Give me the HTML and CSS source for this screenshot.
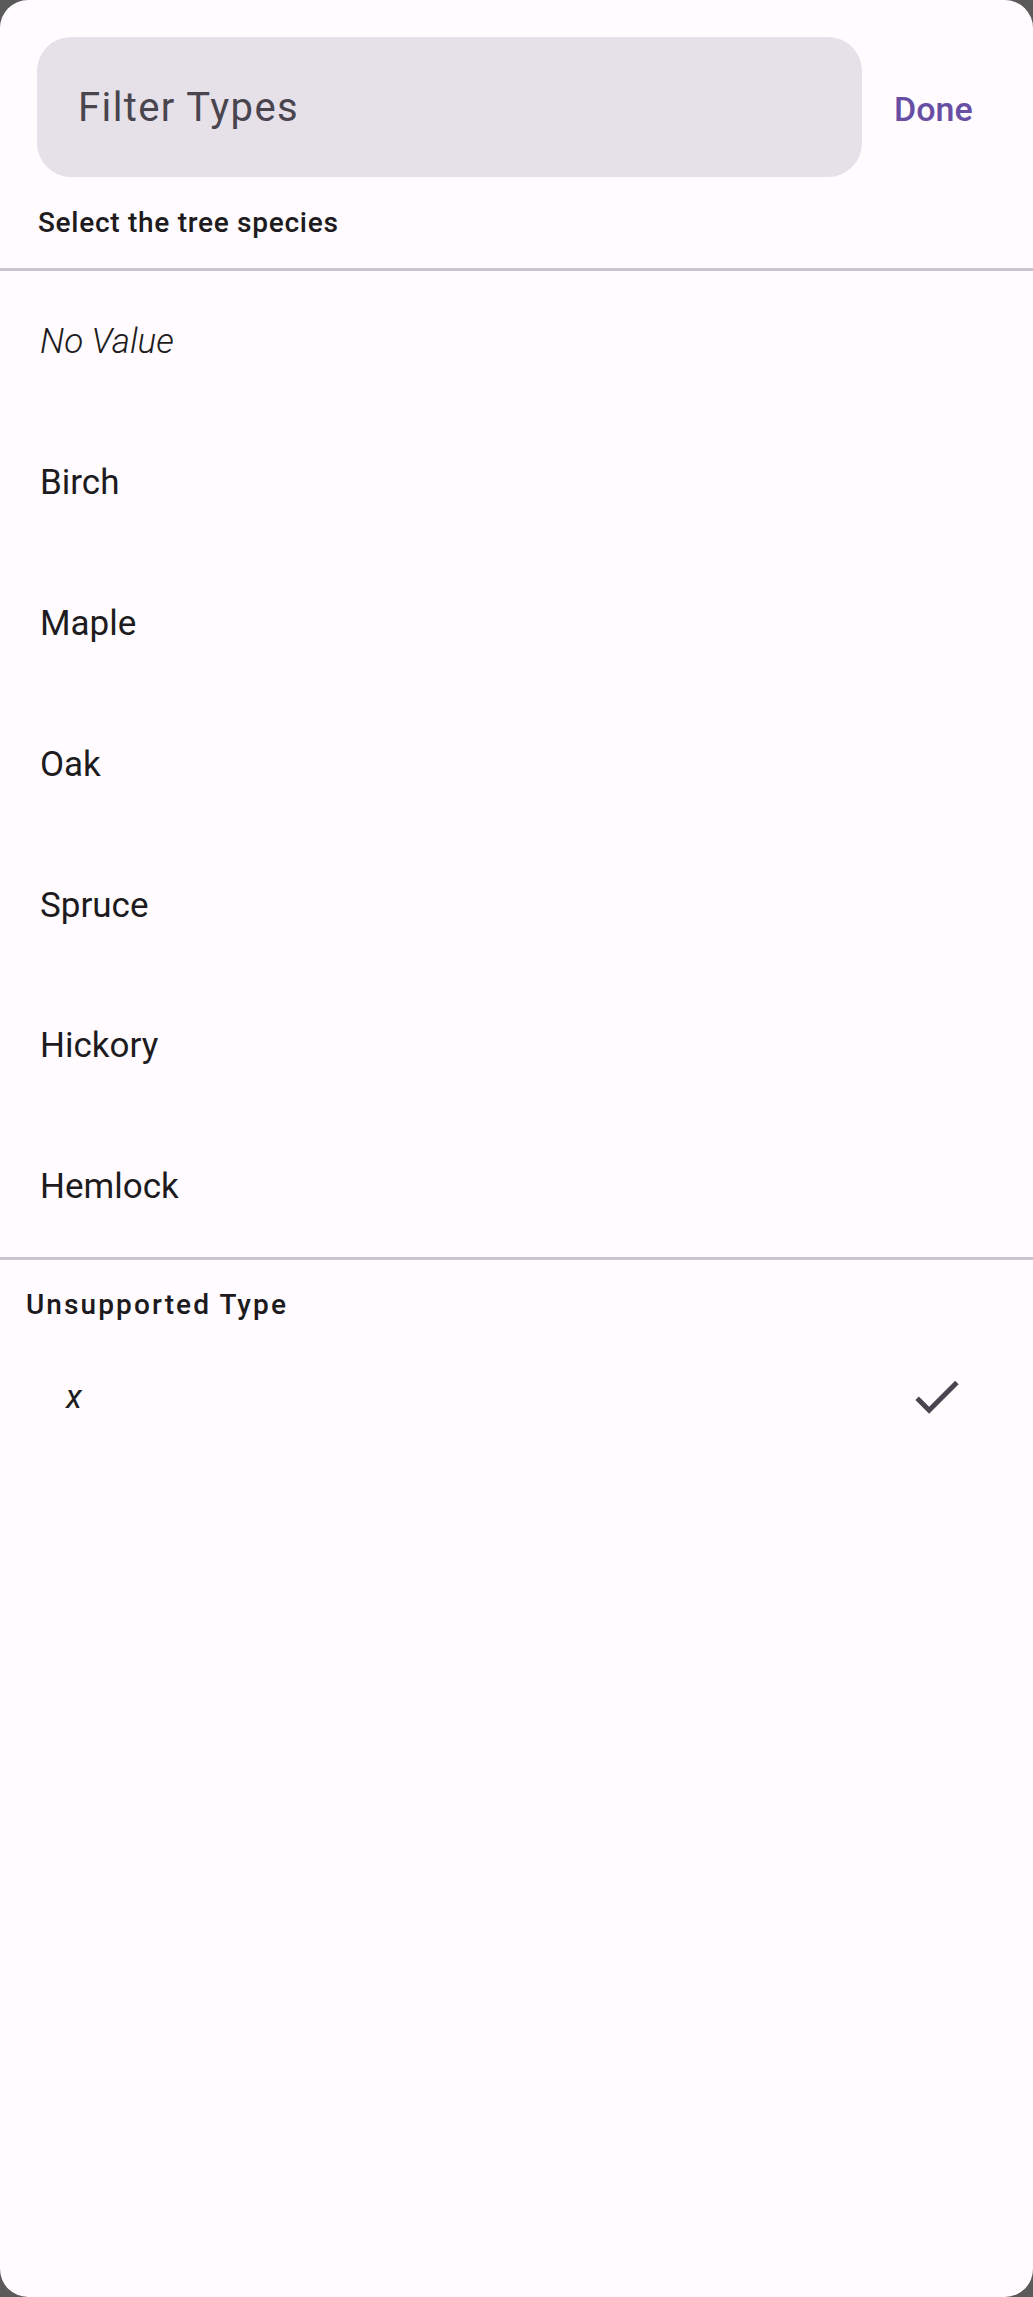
FILE: index.html
```html
<!DOCTYPE html>
<html lang="en">
<head>
<meta charset="utf-8">
<title>Filter Types</title>
<link rel="stylesheet" href="styles.css">
</head>
<body>
<div class="sheet">
  <div class="header">
    <div class="search"><span class="placeholder">Filter Types</span></div>
    <div class="done">Done</div>
  </div>
  <div class="subtitle">Select the tree species</div>
  <div class="divider"></div>
  <ul class="list">
    <li class="row"><span class="label italic">No Value</span></li>
    <li class="row"><span class="label">Birch</span></li>
    <li class="row"><span class="label">Maple</span></li>
    <li class="row"><span class="label">Oak</span></li>
    <li class="row"><span class="label">Spruce</span></li>
    <li class="row"><span class="label">Hickory</span></li>
    <li class="row"><span class="label">Hemlock</span></li>
  </ul>
  <div class="divider"></div>
  <div class="section-title">Unsupported Type</div>
  <div class="selected-row">
    <span class="selected-label">x</span>
    <svg class="check" viewBox="0 0 24 24" aria-hidden="true"><path d="M9 16.17L4.83 12l-1.42 1.41L9 19 21 7l-1.41-1.41z"/></svg>
  </div>
</div>
</body>
</html>
```
FILE: styles.css
```css
html, body {
  margin: 0;
  padding: 0;
  background: #5a5a5a;
}
body {
  font-family: Roboto, "Noto Sans", "Liberation Sans", sans-serif;
  color: #1d1b20;
}
.sheet {
  width: 1033px;
  height: 2297px;
  background: #fffbfe;
  border-radius: 28px;
  overflow: hidden;
  box-sizing: border-box;
}
.header {
  display: flex;
  align-items: center;
  padding: 37px 0 0 37px;
}
.search {
  width: 825px;
  height: 140px;
  background: #e6e0e9;
  border-radius: 34px;
  display: flex;
  align-items: center;
  padding-left: 41px;
  box-sizing: border-box;
}
.placeholder {
  font-size: 40px;
  color: #49454f;
  letter-spacing: 1.4px;
}
.done {
  margin-left: 32px;
  font-family: "Roboto Medium", Roboto, sans-serif;
  font-size: 34px;
  font-weight: 500;
  color: #6750a4;
  padding-top: 3px;
}
.subtitle {
  padding: 26px 0 25px 38px;
  font-family: "Roboto Medium", Roboto, sans-serif;
  font-size: 28px;
  line-height: 40px;
  font-weight: 500;
  letter-spacing: 0.7px;
}
.divider {
  height: 3px;
  background: #cac4d0;
}
.list {
  list-style: none;
  margin: 0;
  padding: 0;
}
.row {
  height: 140.9px;
  display: flex;
  align-items: center;
  padding-left: 40px;
}
.label {
  font-size: 35px;
}
.italic {
  font-style: italic;
  font-weight: 300;
}
.section-title {
  padding: 25px 0 0 26px;
  font-family: "Roboto Medium", Roboto, sans-serif;
  font-size: 28px;
  line-height: 40px;
  font-weight: 500;
  letter-spacing: 2.1px;
}
.selected-row {
  height: 142px;
  display: flex;
  align-items: center;
  justify-content: space-between;
  padding: 0 67px 0 66px;
}
.selected-label {
  font-size: 33px;
  font-style: italic;
}
.check {
  width: 59px;
  height: 59px;
  fill: #49454f;
}
```
